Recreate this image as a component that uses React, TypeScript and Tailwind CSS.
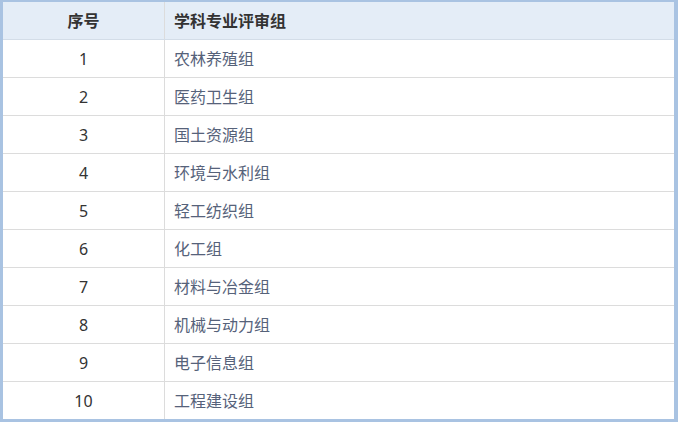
const GROUPS = [
  '农林养殖组',
  '医药卫生组',
  '国土资源组',
  '环境与水利组',
  '轻工纺织组',
  '化工组',
  '材料与冶金组',
  '机械与动力组',
  '电子信息组',
  '工程建设组',
]

export default function App() {
  return (
    <div
      className="box-border h-[422px] w-[678px] border-b-[3px] border-l-[3px] border-r-[4px] border-t-[2px] border-[#a9c3e2] bg-white text-[16px]"
      style={{ fontFamily: '"Noto Sans", "Noto Sans CJK SC", sans-serif' }}
    >
      <div className="flex h-[38px] border-b border-[#d3dde8] bg-[#e4edf7] font-bold text-[#333]">
        <div className="flex w-[162px] items-center justify-center border-r border-[#dcdcdc]">序号</div>
        <div className="flex flex-1 items-center pl-[9px]">学科专业评审组</div>
      </div>
      {GROUPS.map((name, i) => (
        <div
          key={name}
          className={`flex ${i < GROUPS.length - 1 ? 'h-[38px] border-b border-[#dcdcdc]' : 'h-[37px]'}`}
        >
          <div className="flex w-[162px] items-center justify-center border-r border-[#dcdcdc] text-[#333]">
            {i + 1}
          </div>
          <div className="flex flex-1 items-center pl-[9px] text-[#56627a]">{name}</div>
        </div>
      ))}
    </div>
  )
}
